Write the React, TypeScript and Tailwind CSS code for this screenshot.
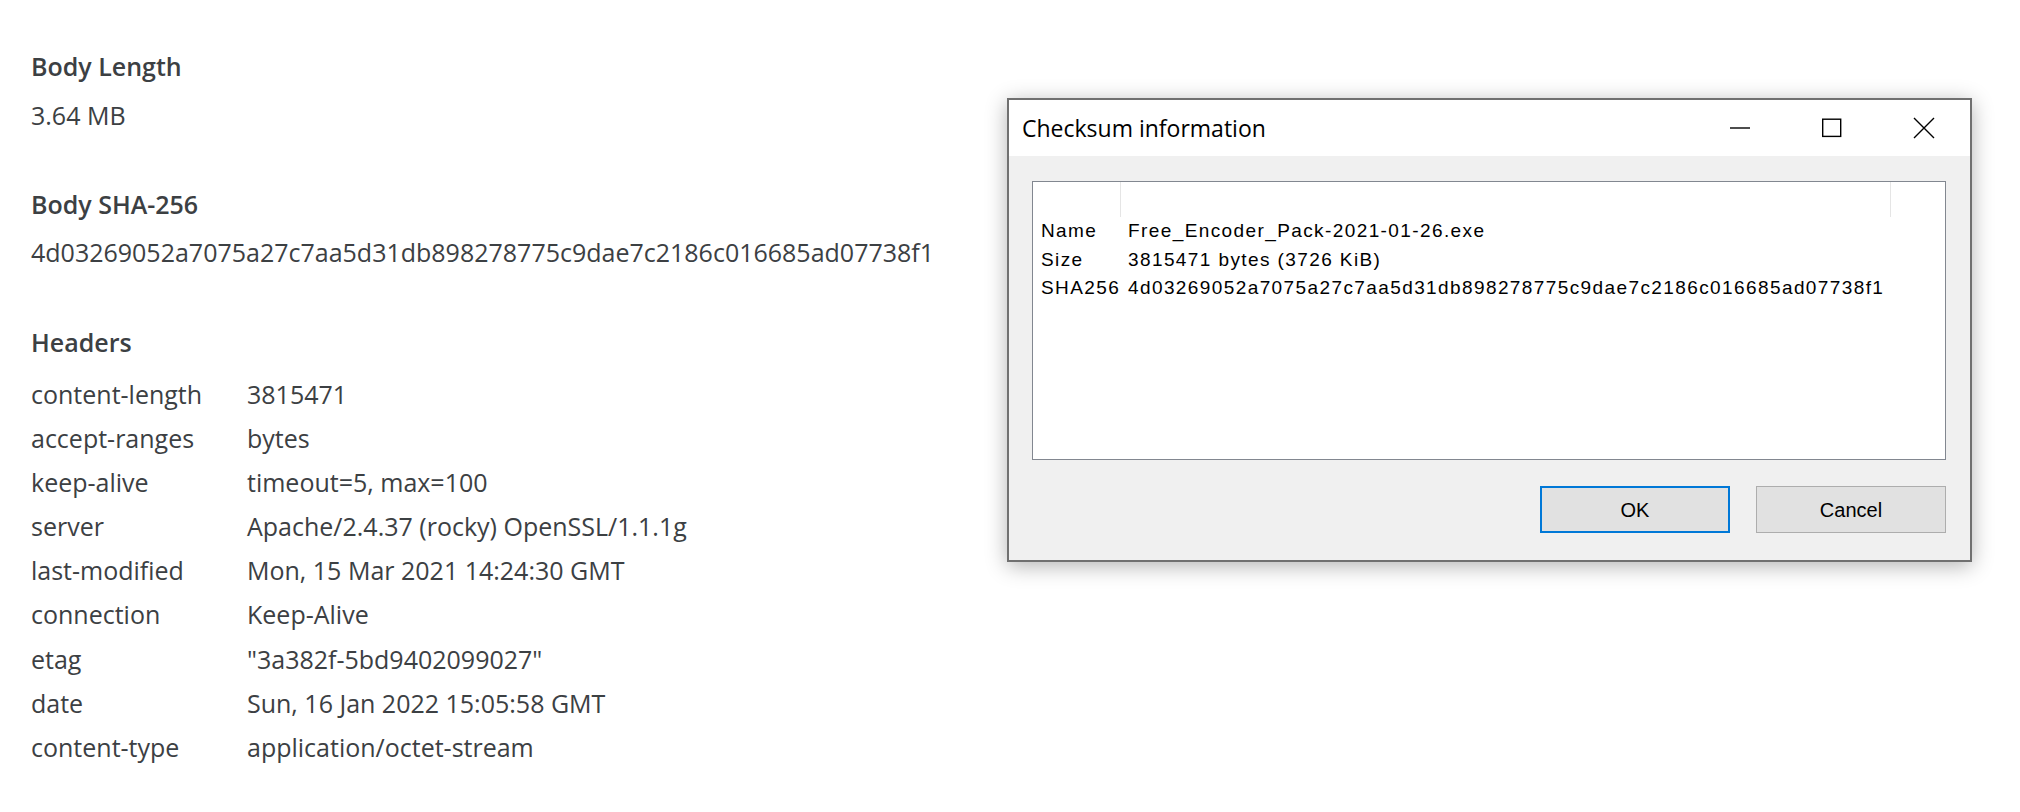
import React from "react";

const headers: [string, string][] = [
  ["content-length", "3815471"],
  ["accept-ranges", "bytes"],
  ["keep-alive", "timeout=5, max=100"],
  ["server", "Apache/2.4.37 (rocky) OpenSSL/1.1.1g"],
  ["last-modified", "Mon, 15 Mar 2021 14:24:30 GMT"],
  ["connection", "Keep-Alive"],
  ["etag", "\"3a382f-5bd9402099027\""],
  ["date", "Sun, 16 Jan 2022 15:05:58 GMT"],
  ["content-type", "application/octet-stream"],
];

const rows: [string, string][] = [
  ["Name", "Free_Encoder_Pack-2021-01-26.exe"],
  ["Size", "3815471 bytes (3726 KiB)"],
  ["SHA256", "4d03269052a7075a27c7aa5d31db898278775c9dae7c2186c016685ad07738f1"],
];

function Dialog() {
  return (
    <div className="absolute left-[1007px] top-[98px] w-[965px] h-[464px] border-2 border-[#707070] bg-[#f0f0f0] shadow-[0_4px_20px_rgba(0,0,0,0.3)] flex flex-col">
      <div className="h-[56px] bg-white flex items-center justify-between shrink-0">
        <div className="pl-[13px] text-[23px] text-black font-['Open_Sans',sans-serif]">Checksum information</div>
        <div className="flex h-full">
          <div className="w-[92px] h-full flex items-center justify-center">
            <svg width="22" height="22" viewBox="0 0 22 22">
              <line x1="1" y1="11" x2="21" y2="11" stroke="#000" strokeWidth="1.4" />
            </svg>
          </div>
          <div className="w-[92px] h-full flex items-center justify-center">
            <svg width="22" height="22" viewBox="0 0 22 22">
              <rect x="1.7" y="2.2" width="18" height="17.2" fill="none" stroke="#000" strokeWidth="1.4" />
            </svg>
          </div>
          <div className="w-[92px] h-full flex items-center justify-center">
            <svg width="22" height="22" viewBox="0 0 22 22">
              <path d="M1 1 L21 21 M21 1 L1 21" stroke="#000" strokeWidth="1.4" fill="none" />
            </svg>
          </div>
        </div>
      </div>
      <div className="flex-1 flex flex-col pt-[25px] pr-[24px] pb-[27px] pl-[23px]">
        <div className="h-[279px] bg-white border border-[#828790] font-['Liberation_Sans',Arial,sans-serif] text-[19px] tracking-[1.4px] text-black">
          <div className="h-[35px] relative">
            <div className="absolute left-[87px] top-0 h-[35px] w-px bg-[#e5e5e5]" />
            <div className="absolute left-[857px] top-0 h-[35px] w-px bg-[#e5e5e5]" />
          </div>
          <div className="pl-[8px]">
            {rows.map(([k, v]) => (
              <div key={k} className="flex leading-[28.5px] whitespace-nowrap">
                <div className="w-[87px] shrink-0">{k}</div>
                <div>{v}</div>
              </div>
            ))}
          </div>
        </div>
        <div className="flex justify-end gap-[26px] mt-[26px]">
          <div className="w-[190px] h-[47px] bg-[#e1e1e1] border-2 border-[#0078d7] flex items-center justify-center text-[20px] text-black font-['Liberation_Sans',Arial,sans-serif]">OK</div>
          <div className="w-[190px] h-[47px] bg-[#e1e1e1] border border-[#adadad] flex items-center justify-center text-[20px] text-black font-['Liberation_Sans',Arial,sans-serif]">Cancel</div>
        </div>
      </div>
    </div>
  );
}

export default function App() {
  return (
    <div className="relative w-[2020px] h-[812px] bg-white overflow-hidden">
      <div className="pl-[31px] pt-[44px] text-[25px] text-[#3c4043] font-['Open_Sans',sans-serif]">
        <div className="leading-[44px] font-semibold">Body Length</div>
        <div className="leading-[44px] mt-[5px]">3.64 MB</div>
        <div className="leading-[44px] font-semibold mt-[45px]">Body SHA-256</div>
        <div className="leading-[44px] mt-[4px]">4d03269052a7075a27c7aa5d31db898278775c9dae7c2186c016685ad07738f1</div>
        <div className="leading-[44px] font-semibold mt-[46px]">Headers</div>
        <div className="mt-[8px]">
          {headers.map(([k, v]) => (
            <div key={k} className="flex leading-[44.1px] whitespace-nowrap">
              <div className="w-[216px] shrink-0">{k}</div>
              <div>{v}</div>
            </div>
          ))}
        </div>
      </div>
      <Dialog />
    </div>
  );
}
